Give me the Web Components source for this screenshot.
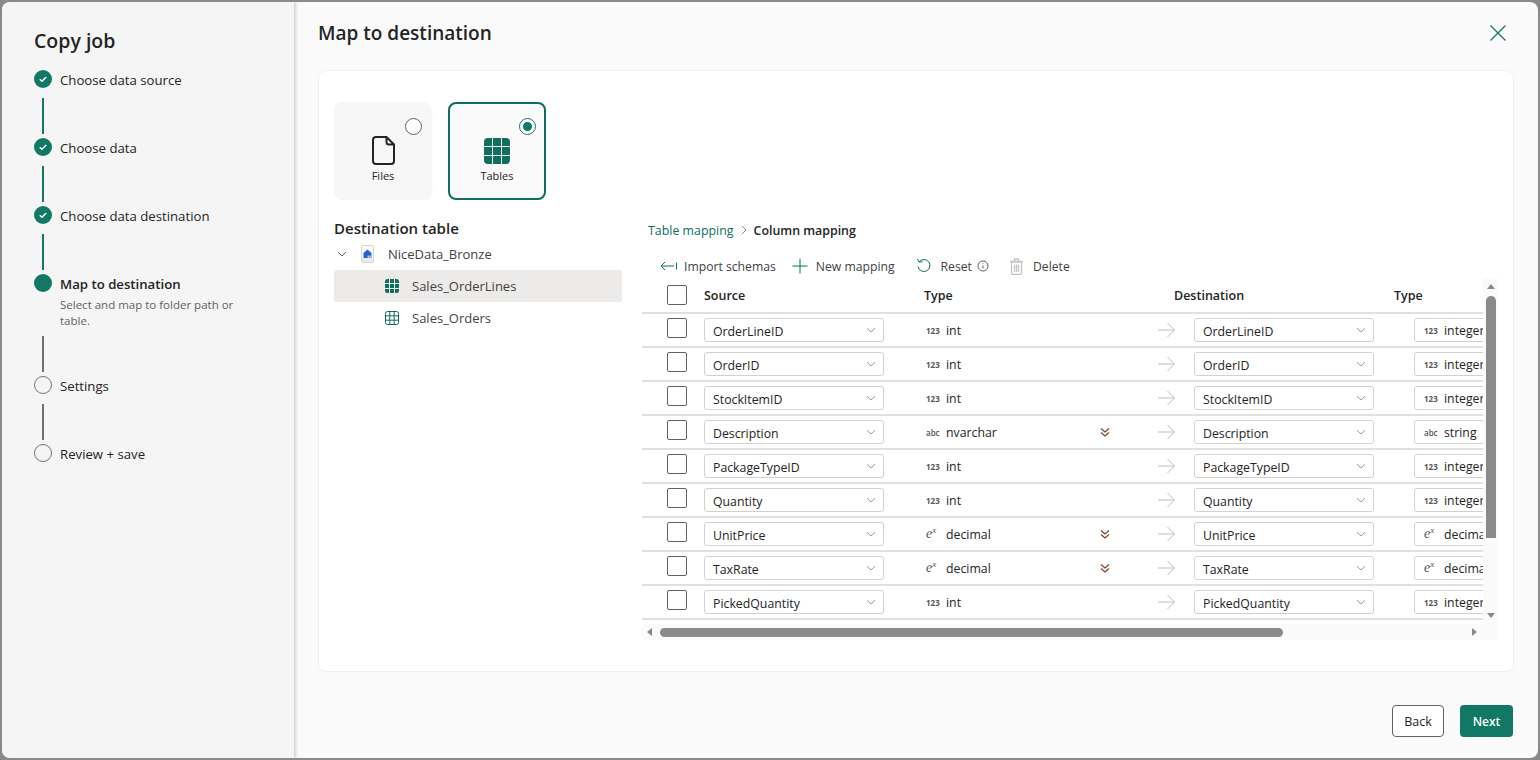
<!DOCTYPE html>
<html lang="en">
<head>
<meta charset="utf-8">
<title>Copy job</title>
<style>
    html, body { margin: 0; height: 100%; overflow: hidden; background: #8a8a8a; }
    body { font-family: "Open Sans", "Noto Sans", sans-serif; font-size: 13px; color: #242424; }
</style>
</head>
<body>
<copy-job-dialog></copy-job-dialog>

<script>
const ROWS = [
    ['OrderLineID', 'int', 'OrderLineID', 'integer'],
    ['OrderID', 'int', 'OrderID', 'integer'],
    ['StockItemID', 'int', 'StockItemID', 'integer'],
    ['Description', 'nvarchar', 'Description', 'string', true],
    ['PackageTypeID', 'int', 'PackageTypeID', 'integer'],
    ['Quantity', 'int', 'Quantity', 'integer'],
    ['UnitPrice', 'decimal', 'UnitPrice', 'decimal', true],
    ['TaxRate', 'decimal', 'TaxRate', 'decimal', true],
    ['PickedQuantity', 'int', 'PickedQuantity', 'integer'],
    ['', '', '', '']
];

const CHEVRON = `<svg width="12" height="12" viewBox="0 0 12 12" fill="none" stroke="#9a9a9a" stroke-width="1"><path d="M2 4.200 6 8l4-3.800"/></svg>`;

class StepItem extends HTMLElement {
    connectedCallback() {
        const state = this.getAttribute('state') || 'todo';
        const last = this.hasAttribute('last');
        const desc = this.getAttribute('desc');
        const line = last ? '' : `<span class="line"></span>`;
        const tick = state === 'done'
            ? `<svg width="18" height="18" viewBox="0 0 18 18" fill="none" stroke="#fff" stroke-width="1.500"><path d="M5.800 9.200 8 11.200 12.200 7"/></svg>`
            : '';

        this.attachShadow({ mode: 'open' }).innerHTML = `
            <style>
                :host { display: flex; gap: 8px; }
                .rail { display: flex; flex-direction: column; align-items: center; width: 18px; flex: none; }
                .dot { width: 18px; height: 18px; border-radius: 50%; box-sizing: border-box; flex: none; display: block; }
                .done, .current { background: #117865; }
                .todo { border: 1.500px solid #757575; }
                .line { width: 2px; height: 36px; margin: auto 0 4px; background: ${state === 'done' ? '#117865' : '#707070'}; }
                .body { padding-bottom: 49px; }
                :host([last]) .body { padding-bottom: 0; }
                .label { padding-top: 1px; font-size: 13.200px; line-height: 18px; font-weight: ${state === 'current' ? 600 : 400}; }
                .desc { width: 190px; height: 34px; margin: 4px 0 -4px; font-size: 11.500px; line-height: 16px; color: #616161; }
            </style>
            <div class="rail"><span class="dot ${state}">${tick}</span>${line}</div>
            <div class="body">
                <div class="label"><slot></slot></div>
                ${desc ? `<div class="desc">${desc}</div>` : ''}
            </div>`;
    }
}

class JobStepper extends HTMLElement {
    constructor() {
        super();
        this.attachShadow({ mode: 'open' }).innerHTML = `
            <style>
                :host { display: block; width: 292px; flex: none; box-sizing: border-box; padding: 25px 32px 0; background: #f5f5f5; box-shadow: 2px 0 3px rgba(0,0,0,.16); position: relative; }
                h2 { margin: 0 0 15px; font-size: 19.500px; line-height: 28px; font-weight: 600; }
            </style>
            <h2>Copy job</h2>
            <step-item state="done">Choose data source</step-item>
            <step-item state="done">Choose data</step-item>
            <step-item state="done">Choose data destination</step-item>
            <step-item state="current" desc="Select and map to folder path or table.">Map to destination</step-item>
            <step-item>Settings</step-item>
            <step-item last>Review + save</step-item>`;
    }
}

class KindCard extends HTMLElement {
    connectedCallback() {
        this.attachShadow({ mode: 'open' }).innerHTML = `
            <style>
                :host { display: block; width: 98px; height: 98px; box-sizing: border-box; border-radius: 8px; position: relative; background: #f7f7f7; }
                :host([selected]) { background: #fafafa; border: 2px solid #0f6e5e; }
                .inner { height: 100%; display: flex; flex-direction: column; align-items: center; justify-content: flex-end; padding-bottom: 16px; box-sizing: border-box; }
                :host([selected]) .inner { padding-bottom: 14px; }
                ::slotted(svg) { display: block; margin-bottom: 3px; }
                .label { font-size: 11px; line-height: 16px; }
                .radio { position: absolute; top: 16px; right: 10px; width: 17px; height: 17px; box-sizing: border-box; border-radius: 50%; border: 1px solid #616161; background: #fff; }
                :host([selected]) .radio { top: 14px; right: 8px; border-color: #117865; }
                :host([selected]) .radio::after { content: ""; display: block; width: 9px; height: 9px; margin: 3px; border-radius: 50%; background: #117865; }
            </style>
            <span class="radio"></span>
            <div class="inner"><slot></slot><div class="label">${this.getAttribute('label')}</div></div>`;
    }
}

class TreeRow extends HTMLElement {
    constructor() {
        super();
        this.attachShadow({ mode: 'open' }).innerHTML = `
            <style>
                :host { display: flex; align-items: center; gap: 12px; height: 32px; padding-left: 50px; border-radius: 2px; font-size: 13px; color: #424242; }
                :host([selected]) { background: #edebe9; }
                ::slotted(svg) { flex: none; }
            </style>
            <slot name="icon"></slot><slot></slot>`;
    }
}

class DestTree extends HTMLElement {
    constructor() {
        super();
        this.attachShadow({ mode: 'open' }).innerHTML = `
            <style>
                :host { display: block; width: 288px; flex: none; }
                h3 { margin: 0; font-size: 15px; line-height: 20px; font-weight: 600; }
                .root { display: flex; align-items: center; height: 32px; font-size: 13px; color: #424242; }
                .root svg { flex: none; }
                .caret { margin-left: 2px; margin-right: 13px; }
                .house { margin-right: 14px; }
            </style>
            <h3>Destination table</h3>
            <div class="root">
                <svg class="caret" width="12" height="12" viewBox="0 0 12 12" fill="none" stroke="#616161"><path d="M2 4l4 4 4-4"/></svg>
                <svg class="house" width="13" height="18" viewBox="0 0 13 18"><rect x=".5" y=".5" width="12" height="17" rx="1.500" fill="#fafafa" stroke="#d6d6d6"/><rect x="1" y="13" width="11" height="4" fill="#ececec"/><path d="M2.500 13V8L6.500 4.500 10.500 8v5z" fill="#2564cf"/><path d="M6.500 13v-2.500h4V13z" fill="#9db8e8"/></svg>
                <span>NiceData_Bronze</span>
            </div>
            <tree-row selected>
                <svg slot="icon" width="16" height="16" viewBox="0 0 16 16" fill="#0f6e5e"><path d="M1 3.500A2.500 2.500 0 0 1 3.500 1H5v4H1zM6 1h4v4H6zM11 1h1.500A2.500 2.500 0 0 1 15 3.500V5h-4zM1 6h4v4H1zM6 6h4v4H6zM11 6h4v4h-4zM1 11h4v4H3.500A2.500 2.500 0 0 1 1 12.500zM6 11h4v4H6zM11 11h4v1.500a2.500 2.500 0 0 1-2.500 2.500H11z"/></svg>
                Sales_OrderLines
            </tree-row>
            <tree-row>
                <svg slot="icon" width="16" height="16" viewBox="0 0 16 16" fill="none" stroke="#0f6e5e"><rect x="1.500" y="1.500" width="13" height="13" rx="2"/><path d="M5.800 1.500v13M10.200 1.500v13M1.500 5.800h13M1.500 10.200h13"/></svg>
                Sales_Orders
            </tree-row>`;
    }
}

class FieldSelect extends HTMLElement {
    constructor() {
        super();
        this.attachShadow({ mode: 'open' }).innerHTML = `
            <style>
                :host { display: flex; align-items: center; justify-content: space-between; width: 180px; height: 24px; box-sizing: border-box; padding: 0 6px 0 8px; background: #fff; border: 1px solid #d1d1d1; border-radius: 3px; font-size: 12.300px; flex: none; }
                span { padding-top: 2px; }
                svg { display: block; }
            </style>
            <span><slot></slot></span>${CHEVRON}`;
    }
}

class TypeTag extends HTMLElement {
    constructor() {
        super();
        this.attachShadow({ mode: 'open' });
    }

    set name(name) {
        let glyph = '<b class="num">123</b>';
        if (name === 'nvarchar' || name === 'string') glyph = '<b class="abc">abc</b>';
        if (name === 'decimal') glyph = '<i class="exp">e<sup>x</sup></i>';

        this.shadowRoot.innerHTML = `
            <style>
                :host { display: flex; align-items: center; font-size: 12.300px; }
                .g { width: 20px; flex: none; line-height: 12px; color: #555; white-space: nowrap; }
                .num, .abc { font-size: 8px; font-weight: 700; }
                .abc { font-weight: 600; }
                .exp { font-family: "Liberation Serif", serif; font-size: 14px; }
                sup { font-size: 9px; line-height: 0; vertical-align: 5px; }
            </style>
            <span class="g">${glyph}</span><span>${name}</span>`;
    }
}

class MappingRow extends HTMLElement {
    constructor() {
        super();
        this.attachShadow({ mode: 'open' }).innerHTML = `
            <style>
                :host { display: flex; align-items: flex-start; width: 1000px; height: 34px; box-sizing: border-box; padding: 4px 0 0 25px; border-bottom: 2px solid #e0e0e0; }
                .check { width: 20px; height: 20px; box-sizing: border-box; flex: none; margin-right: 17px; border: 1px solid #616161; border-radius: 2px; background: #fff; }
                type-tag { display: flex; height: 24px; }
                .src-type { width: 173px; margin-left: 42px; flex: none; }
                .more { width: 59px; height: 24px; display: flex; align-items: center; flex: none; }
                .arrow { width: 36px; height: 24px; flex: none; }
                .dest-type { margin-left: 40px; width: 180px; box-sizing: border-box; padding-left: 9px; border: 1px solid #d1d1d1; border-radius: 3px; background: #fff; flex: none; }
            </style>
            <span class="check"></span>
            <field-select id="src"></field-select>
            <type-tag class="src-type" id="st"></type-tag>
            <span class="more" id="more"></span>
            <svg class="arrow" viewBox="0 0 36 24" fill="none" stroke="#bdbdbd"><path d="M0 12h16M9.500 5l7 7-7 7"/></svg>
            <field-select id="dst"></field-select>
            <type-tag class="dest-type" id="dt"></type-tag>`;
    }

    set data(row) {
        const root = this.shadowRoot;
        root.getElementById('src').textContent = row[0];
        root.getElementById('dst').textContent = row[2];
        if (row[1]) root.getElementById('st').name = row[1];
        if (row[3]) root.getElementById('dt').name = row[3];
        if (row[4]) {
            root.getElementById('more').innerHTML = `<svg width="12" height="12" viewBox="0 0 12 12" fill="none" stroke="#7a3f22" stroke-width="1.100"><path d="M2 2.500 6 6l4-3.500M2 6.500 6 10l4-3.500"/></svg>`;
        }
    }
}

class MappingTable extends HTMLElement {
    constructor() {
        super();
        this.attachShadow({ mode: 'open' }).innerHTML = `
            <style>
                :host { display: grid; grid-template-columns: 841px 15px; grid-template-rows: 346px 16px; }
                .view { overflow: hidden; background: #fff; }
                .head { display: flex; align-items: center; width: 1000px; height: 36px; box-sizing: border-box; padding: 0 0 0 25px; border-bottom: 2px solid #e0e0e0; font-weight: 600; font-size: 12.500px; }
                .check { width: 20px; height: 20px; box-sizing: border-box; border: 1px solid #616161; border-radius: 2px; flex: none; margin-right: 17px; }
                .head span { flex: none; }
                .vbar { background: #fafafa; display: flex; flex-direction: column; align-items: center; padding-top: 6px; box-sizing: border-box; }
                .hbar { background: #fafafa; display: flex; align-items: center; padding: 0 5px; box-sizing: border-box; }
                .corner { background: #fafafa; }
                .up, .down { width: 0; height: 0; border-left: 4.500px solid transparent; border-right: 4.500px solid transparent; flex: none; }
                .up { border-bottom: 5px solid #8a8a8a; margin-bottom: 7px; }
                .down { border-top: 5px solid #8a8a8a; margin-top: auto; margin-bottom: 6px; }
                .vthumb { width: 10px; height: 242px; border-radius: 5px 5px 0 0; background: #8a8a8a; flex: none; }
                .left, .right { width: 0; height: 0; border-top: 4.500px solid transparent; border-bottom: 4.500px solid transparent; flex: none; }
                .left { border-right: 5px solid #8a8a8a; margin-right: 8px; }
                .right { border-left: 5px solid #8a8a8a; margin-left: auto; margin-right: 1px; }
                .hthumb { width: 623px; height: 9px; border-radius: 4.500px; background: #8a8a8a; flex: none; }
            </style>
            <div class="view">
                <div class="head">
                    <span class="check"></span>
                    <span style="width:220px">Source</span>
                    <span style="width:250px">Type</span>
                    <span style="width:220px">Destination</span>
                    <span>Type</span>
                </div>
                <div id="rows"></div>
            </div>
            <div class="vbar"><span class="up"></span><span class="vthumb"></span><span class="down"></span></div>
            <div class="hbar"><span class="left"></span><span class="hthumb"></span><span class="right"></span></div>
            <div class="corner"></div>`;

        const holder = this.shadowRoot.getElementById('rows');
        for (const row of ROWS) {
            const el = document.createElement('mapping-row');
            holder.appendChild(el);
            el.data = row;
        }
    }
}

class CopyJobDialog extends HTMLElement {
    constructor() {
        super();
        this.attachShadow({ mode: 'open' }).innerHTML = `
            <style>
                :host { display: flex; box-sizing: border-box; height: 756px; margin: 2px; border-radius: 8px; overflow: hidden; background: #fafafa; }
                main { flex: 1; min-width: 0; display: flex; flex-direction: column; padding: 0 24px; }
                header { display: flex; align-items: center; justify-content: space-between; height: 68px; padding-bottom: 6px; box-sizing: border-box; }
                h1 { margin: 0; font-size: 19px; line-height: 28px; font-weight: 600; }
                .card { box-sizing: border-box; height: 602px; padding: 31px 15px 0; background: #fff; border: 1px solid #f0f0f0; border-radius: 8px; }
                .kinds { display: flex; gap: 16px; margin-bottom: 18px; }
                .split { display: flex; gap: 20px; }
                .right { width: 856px; flex: none; padding-top: 2px; }
                .crumbs { display: flex; align-items: center; gap: 6px; height: 20px; padding-left: 6px; font-size: 12.400px; }
                .crumbs a { color: #0f6e5e; }
                .crumbs b { font-weight: 600; }
                .tools { display: flex; align-items: center; height: 24px; margin-top: 14px; padding-left: 18px; font-size: 12.200px; color: #424242; }
                .tools svg { flex: none; display: block; }
                .tools span { white-space: nowrap; }
                footer { flex: 1; display: flex; justify-content: flex-end; align-items: center; gap: 16px; padding: 12px 1px 0 0; }
                button { height: 32px; box-sizing: border-box; font: inherit; font-size: 12px; font-weight: 600; border-radius: 4px; padding: 0; }
                .back { width: 52px; background: #fff; border: 1px solid #616161; color: #242424; font-size: 12.500px; font-weight: 400; }
                .next { width: 53px; background: #117865; border: 0; color: #fff; }
            </style>
            <job-stepper></job-stepper>
            <main>
                <header>
                    <h1>Map to destination</h1>
                    <svg width="18" height="18" viewBox="0 0 18 18" fill="none" stroke="#117865" stroke-width="1.300" style="margin-right:7px"><path d="M1.500 1.500l15 15M16.500 1.500l-15 15"/></svg>
                </header>
                <section class="card">
                    <div class="kinds">
                        <kind-card label="Files">
                            <svg width="23" height="29" viewBox="0 0 23 29" fill="none" stroke="#242424" stroke-width="2"><path d="M4 1h10.500L22 8.500V25a3 3 0 0 1-3 3H4a3 3 0 0 1-3-3V4a3 3 0 0 1 3-3zM14.500 1v5a2.500 2.500 0 0 0 2.500 2.500h5"/></svg>
                        </kind-card>
                        <kind-card label="Tables" selected>
                            <svg width="28" height="28" viewBox="0 0 28 28" fill="#0f6e5e"><path d="M1 5a4 4 0 0 1 4-4h4v8H1zM10 1h8v8h-8zM19 1h4a4 4 0 0 1 4 4v4h-8zM1 10h8v8H1zM10 10h8v8h-8zM19 10h8v8h-8zM1 19h8v8H5a4 4 0 0 1-4-4zM10 19h8v8h-8zM19 19h8v4a4 4 0 0 1-4 4h-4z"/></svg>
                        </kind-card>
                    </div>
                    <div class="split">
                        <dest-tree></dest-tree>
                        <div class="right">
                            <div class="crumbs">
                                <a>Table mapping</a>
                                <svg width="8" height="10" viewBox="0 0 8 10" fill="none" stroke="#8a8a8a"><path d="M2 1l4 4-4 4"/></svg>
                                <b>Column mapping</b>
                            </div>
                            <div class="tools">
                                <svg width="18" height="12" viewBox="0 0 18 12" fill="none" stroke="#0f6e5e" style="margin-right:6px"><path d="M5 2 1 6l4 4M1 6h13M16.500 2.500v7"/></svg>
                                <span>Import schemas</span>
                                <svg width="16" height="16" viewBox="0 0 16 16" fill="none" stroke="#0f6e5e" style="margin:0 8px 0 16px"><path d="M8 .5v15M.5 8h15"/></svg>
                                <span>New mapping</span>
                                <svg width="16" height="16" viewBox="0 0 16 16" fill="none" stroke="#0f6e5e" style="margin:0 9px 0 21px"><path d="M3.200 3.800A6 6 0 1 1 2 8.500M1.500 1 3 4l3.500-.200"/></svg>
                                <span>Reset</span>
                                <svg width="12" height="12" viewBox="0 0 12 12" fill="none" stroke="#616161" style="margin:0 20px 0 5px"><circle cx="6" cy="6" r="5"/><path d="M6 5.500v3M6 3.200v1"/></svg>
                                <svg width="15" height="17" viewBox="0 0 15 17" fill="none" stroke="#c4c4c4" stroke-width="1.300" style="margin-right:9px"><path d="M2.500 4h10v11a1.500 1.500 0 0 1-1.500 1.500H4A1.500 1.500 0 0 1 2.500 15zM1 3.500h13M5.500 3.500v-2.500h4v2.500M5.500 6.500v7.500M7.500 6.500v7.500M9.500 6.500v7.500"/></svg>
                                <span>Delete</span>
                            </div>
                            <mapping-table></mapping-table>
                        </div>
                    </div>
                </section>
                <footer>
                    <button class="back">Back</button>
                    <button class="next">Next</button>
                </footer>
            </main>`;
    }
}

customElements.define('step-item', StepItem);
customElements.define('job-stepper', JobStepper);
customElements.define('kind-card', KindCard);
customElements.define('tree-row', TreeRow);
customElements.define('dest-tree', DestTree);
customElements.define('field-select', FieldSelect);
customElements.define('type-tag', TypeTag);
customElements.define('mapping-row', MappingRow);
customElements.define('mapping-table', MappingTable);
customElements.define('copy-job-dialog', CopyJobDialog);
</script>
</body>
</html>
